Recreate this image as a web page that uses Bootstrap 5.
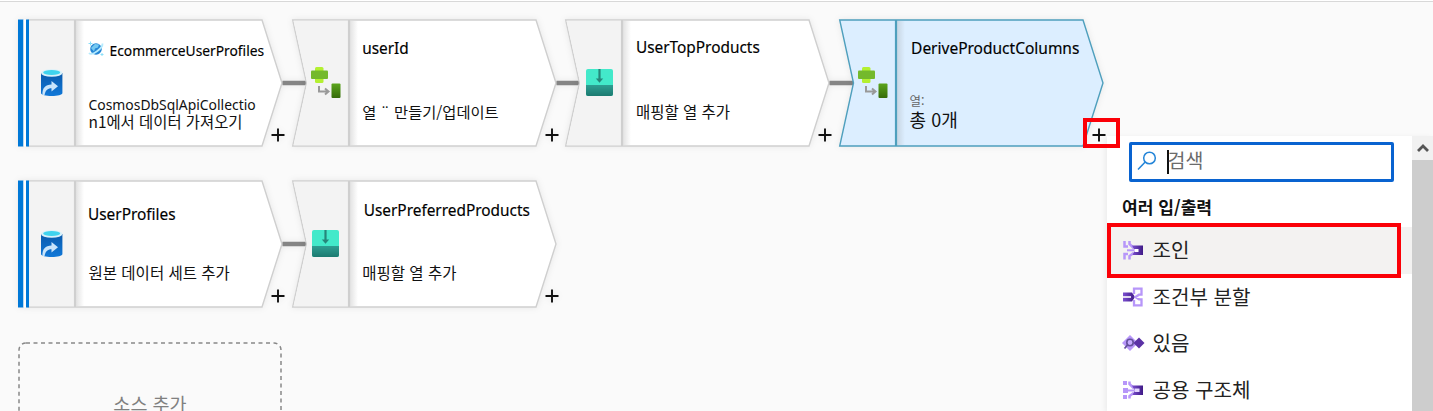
<!DOCTYPE html>
<html lang="ko">
<head>
<meta charset="utf-8">
<title>데이터 흐름</title>
<link href="https://cdn.jsdelivr.net/npm/bootstrap@5.3.0/dist/css/bootstrap.min.css" rel="stylesheet">
<style>
body{background:#fafafa;color:#111;font-family:"Noto Sans","Noto Sans CJK KR",sans-serif;width:1433px;height:411px}
.topline{height:2px;border-bottom:1px solid #d8d8d8;background:#fff}
.canvas{height:409px;padding-top:16.5px}
.flow-row{height:128px;margin-left:18px}
.flow-row + .flow-row{margin-top:33px}
.node{display:grid;width:273.7px;height:128px;flex:none}
.node > *{grid-area:1/1}
.shape{width:274px;height:128px;overflow:visible;filter:drop-shadow(0 0 3px #00000014)}
.outline,.divider{stroke:#cfcfcf;stroke-width:1.4}
.divider{stroke-width:2.2}
.selected .outline,.selected .divider{stroke:#4e9fbd}
.node-body{margin-left:70.5px;white-space:nowrap;z-index:1}
.title{font-size:15.4px;line-height:20px;height:20px;margin-top:19.5px;color:#000;-webkit-text-stroke:.15px #000}
.title-small{font-size:13.8px}
.desc{font-family:"Noto Sans CJK KR",sans-serif;font-size:15.5px;line-height:20px;margin-top:42.5px}
.desc2{font-size:13.9px;line-height:16px;margin-top:36px}
.count{font-family:"Noto Sans CJK KR",sans-serif}
.desc2 .count{font-size:15.4px}
.add-source{margin:34px 0 0 18px;width:264px;height:69px;color:#808080;font-family:"Noto Sans CJK KR",sans-serif;font-size:18.5px}
.add-source > *{grid-area:1/1}
.add-source span{margin-top:47px;line-height:28px}
.mark-plus{left:1083px;top:118px;width:37px;height:30px;border:4px solid #fb0007}
.menu{left:1107px;top:136px;width:326px;height:275px;background:#fff;font-family:"Noto Sans CJK KR",sans-serif;box-shadow:-2px 1px 5px #0000000f}
.find{margin:6px 0 0 22px;width:265px;height:40px;border:3px solid #0963d0;border-radius:2px;font-size:19.5px;color:#6b6b6b}
.find span{margin:-4px 0 0 -1px}
.caret{width:1.5px;height:24px;background:#111}
.group-name{font-size:17.1px;font-weight:700;line-height:24px;margin:13px 0 8px 15px;height:24px}
.op{height:46.5px;padding-left:15px;font-size:20.1px;color:#222}
.op.active-op{background:#f3f2f1}
.op svg{width:22px;height:22px;margin-right:8.5px}
.mark-op{left:0;top:87px;width:294px;height:55px;border:4px solid #fb0007}
.scroller{width:21px;background:#cdcdcd}
.scroller .up{height:24px;background:#f1f1f1}
</style>
</head>
<body class="overflow-hidden position-relative m-0">
<svg width="0" height="0" class="position-absolute">
<defs>
<linearGradient id="shade"><stop stop-color="#888" stop-opacity=".24"/><stop offset="1" stop-color="#888" stop-opacity="0"/></linearGradient>
<linearGradient id="green" x2="0" y2="1"><stop stop-color="#5ba51c"/><stop offset="1" stop-color="#356b09"/></linearGradient>
<linearGradient id="blue" x2="0" y2="1"><stop stop-color="#0a5aac"/><stop offset="1" stop-color="#1078d8"/></linearGradient>
<linearGradient id="teal" x2="0" y2="1"><stop stop-color="#2e9e92"/><stop offset="1" stop-color="#1c7a70"/></linearGradient>
<linearGradient id="violet" x2="1" y2="0"><stop stop-color="#7b4fd0"/><stop offset="1" stop-color="#3f1a86"/></linearGradient>
<g id="i-source">
<path d="M23 54v20c0 2 5 3 10.700 3s10.700-1 10.700-3V54z" fill="url(#blue)"/>
<ellipse cx="33.700" cy="54" rx="10.700" ry="3.800" fill="#d8f1fa"/><ellipse cx="33.700" cy="53.500" rx="8.500" ry="2.500" fill="#3fd3ee"/>
<path d="M24.500 76c-.5-7 3-10.500 9-10.500v-3.500l6.500 5.300-6.500 5.200V69.300c-4 0-6 2-7 7z" fill="#c8e4fb"/>
</g>
<g id="i-derive">
<rect x="23" y="48" width="8.500" height="16" rx="1.500" fill="#b3f030"/><rect x="19" y="51.500" width="17" height="8.500" rx="1" fill="#74b92c"/>
<path d="M27 67v5.500h8M33 69.500l3.500 3-3.500 3" fill="none" stroke="#999" stroke-width="2"/>
<rect x="39.500" y="64.500" width="9" height="14.500" rx="1" fill="url(#green)"/>
</g>
<g id="i-sink">
<rect x="20" y="50" width="27" height="27" rx="2" fill="#43e9ca"/><path d="M20 66h27v9a2 2 0 0 1-2 2H22a2 2 0 0 1-2-2z" fill="url(#teal)"/>
<path d="M33.500 50v10" stroke="#26867a" stroke-width="2.200"/><path d="M29.800 59.500h7.400l-3.700 4.200z" fill="#26867a"/>
</g>
<g id="plus"><path d="M253.500 116h13M260 109.500v13" stroke="#111" stroke-width="1.900"/></g>
<g id="src">
<path class="outline" d="M10 1H244l20 63-20 63H10z" fill="#fff"/><path d="M11 1.700h46v124.600H11z" fill="#f3f3f3"/>
<rect x="58" y="2" width="8" height="124" fill="url(#shade)"/><path class="divider" d="M57 1v126"/>
<path d="M0 .5h5.500v127H0z" fill="#0078d7"/><path d="M5.500 .5h2.500v127H5.500z" fill="#fff"/><path d="M8 .5h3v127H8z" fill="#0078d7"/>
<use href="#i-source"/><use href="#plus"/>
</g>
<g id="step">
<path class="outline" d="M.7 1H244l20 63-20 63H.7L14.500 64z" fill="#fff"/><path d="M1.500 1.700H57v124.600H1.500L15.200 64z" fill="#f3f3f3"/>
<rect x="58" y="2" width="8" height="124" fill="url(#shade)"/><path class="divider" d="M57 1v126"/><use href="#plus"/>
</g>
<path id="link" d="M264.500 64h23.500" stroke="#858585" stroke-width="4.500"/>
</defs>
</svg>
<div class="topline"></div>
<main class="canvas overflow-hidden">
<div class="flow-row d-flex">
 <div class="node"><svg class="shape"><use href="#src"/><use href="#link"/></svg>
  <div class="node-body"><div class="title title-small d-flex align-items-center" style="margin-top:22.5px"><svg width="16" height="16" viewBox="0 0 16 16" style="margin:-4px 6px 0 -1px"><circle cx="8" cy="8" r="5.800" fill="#2586d5"/><path d="M3 7l4-4 4 .5-1 3-3 1-1 3z" fill="#74c9f1"/><path d="M1 12C4 15.500 15 7 14.500 2.500" fill="none" stroke="#b4eafd" stroke-width="1.800"/><path d="M2.500 .5v4M.5 2.500h4M14 12v3M12.500 13.500h3" stroke="#8adff9"/></svg><span>EcommerceUserProfiles</span></div>
  <div class="desc2"><div>CosmosDbSqlApiCollectio</div><div class="count">n1에서 데이터 가져오기</div></div></div></div>
 <div class="node"><svg class="shape"><use href="#step"/><use href="#i-derive"/><use href="#link"/></svg>
  <div class="node-body"><div class="title" style="margin-top:20px">userId</div><div class="desc" style="margin-top:42px;font-size:15.300px">열 ¨ 만들기/업데이트</div></div></div>
 <div class="node"><svg class="shape"><use href="#step"/><use href="#i-sink" x="1"/><use href="#link"/></svg>
  <div class="node-body"><div class="title">UserTopProducts</div><div class="desc">매핑할 열 추가</div></div></div>
 <div class="node"><svg class="shape selected" fill="#dceeff"><path class="outline" d="M.7 1H244l20 63-20 63H.7L14.500 64z"/><rect x="58" y="2" width="8" height="124" fill="url(#shade)"/><path class="divider" d="M57 1v126"/><use href="#i-derive"/></svg>
  <div class="node-body"><div class="title" style="margin-left:1.5px;margin-top:19px;font-size:15.500px">DeriveProductColumns</div><div class="count" style="margin-top:35.5px;font-size:12.500px;line-height:15px;color:#666">열:</div><div class="count" style="font-size:18px;line-height:22px">총 0개</div></div></div>
</div>
<div class="flow-row d-flex">
 <div class="node"><svg class="shape"><use href="#src"/><use href="#link"/></svg>
  <div class="node-body"><div class="title" style="margin-top:25.5px;margin-left:-.5px">UserProfiles</div><div class="desc" style="margin-top:36.5px">원본 데이터 세트 추가</div></div></div>
 <div class="node"><svg class="shape"><use href="#step"/><use href="#i-sink"/></svg>
  <div class="node-body"><div class="title" style="margin-left:1.5px;margin-top:21px">UserPreferredProducts</div><div class="desc" style="margin-top:41px">매핑할 열 추가</div></div></div>
</div>
<div class="add-source d-grid text-center overflow-hidden">
 <svg width="264" height="69"><rect x="1" y="1" width="262" height="125" rx="7" fill="none" stroke="#888" stroke-width="1.500" stroke-dasharray="4 3.500"/></svg><span>소스 추가</span>
</div>
</main>
<aside class="menu position-absolute d-flex">
 <div class="flex-grow-1 overflow-hidden">
  <div class="find d-flex align-items-center"><svg width="20" height="20" viewBox="0 0 20 20" style="margin:-2px 10px 0 5px"><circle cx="12.500" cy="7" r="5.800" fill="none" stroke="#2485d8" stroke-width="1.500"/><path d="M8.200 11L1 18.500" stroke="#2485d8" stroke-width="1.600"/></svg><i class="caret"></i><span>검색</span></div>
  <div class="group-name">여러 입/출력</div>
  <div class="op active-op d-flex align-items-center"><svg viewBox="0 0 22 22"><path d="M2.500 2v5.500H6M7.500 2v3l4 4M11.500 14l-4 3v3.500M2.500 20.500V15H6" stroke="#b796f9" stroke-width="2.500" fill="none"/><path d="M12 6.500h9V16H10.500l2-4.500L10 6.500z" fill="url(#violet)"/><path d="M5 11.300h8" stroke="#b796f9" stroke-width="2"/><path d="M12.500 10h4v3h-4z" fill="#fff"/></svg><span>조인</span></div>
  <div class="op d-flex align-items-center"><svg viewBox="0 0 22 22"><path d="M1 6.500h9l3 4.500-3 4.500H1z" fill="url(#violet)"/><path d="M1 11h8" stroke="#fff" stroke-width="1.600"/><path d="M12 8V2.700h7.500v6H17L13.500 11l3.500 2.300h2.500v6H12V14" fill="none" stroke="#b796f9" stroke-width="2.300"/></svg><span>조건부 분할</span></div>
  <div class="op d-flex align-items-center"><svg viewBox="0 0 22 22" overflow="visible"><path d="M8 3l8 8-8 8-8-8z" fill="#b796f9"/><path d="M17 5.500l5.500 5.500-5.500 5.500-5.500-5.500z" fill="#5b31a5"/><circle cx="8" cy="10.500" r="3.200" fill="#c6aaff" stroke="#64509c" stroke-width="1.600"/><path d="M5.500 13l-3 3.500" stroke="#64509c" stroke-width="1.800"/></svg><span>있음</span></div>
  <div class="op d-flex align-items-center"><svg viewBox="0 0 22 22"><path d="M1 2h4v4H1zM1 9h5v5H1zM1 16h4v4H1z" fill="#b796f9"/><path d="M7.500 2.500v2.500l4 4M11.500 14l-4 3v2.500" stroke="#b796f9" stroke-width="2.500" fill="none"/><path d="M12 6.500h9V16H10.500l2-4.500L10 6.500z" fill="url(#violet)"/><path d="M5 11.500h7" stroke="#b796f9" stroke-width="2"/><path d="M12.500 9.500h5v3.500h-5z" fill="#e3d6ff"/></svg><span>공용 구조체</span></div>
 </div>
 <div class="scroller"><div class="up d-flex align-items-center justify-content-center"><svg width="14" height="10" viewBox="0 0 14 10"><path d="M2 8l5-5 5 5" fill="none" stroke="#555" stroke-width="2.800"/></svg></div></div>
 <div class="mark-op position-absolute"></div>
</aside>
<div class="mark-plus position-absolute"><svg class="d-block" width="14" height="14" style="margin:6px 0 0 5px"><path d="M.5 7h13M7 .5v13" stroke="#111" stroke-width="1.900"/></svg></div>
<script src="https://cdn.jsdelivr.net/npm/bootstrap@5.3.0/dist/js/bootstrap.bundle.min.js"></script>
</body>
</html>
